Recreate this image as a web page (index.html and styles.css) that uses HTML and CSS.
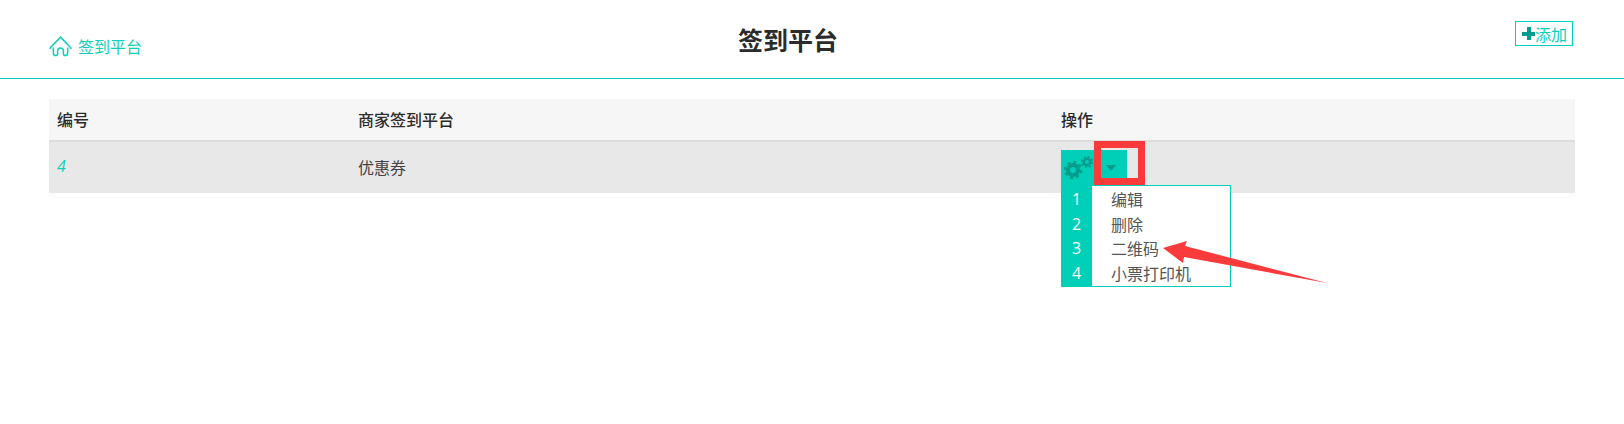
FILE: index.html
```html
<!DOCTYPE html>
<html lang="zh-CN">
<head>
<meta charset="utf-8">
<title>签到平台</title>
<link rel="stylesheet" href="styles.css">
</head>
<body>
<header class="topbar">
  <a class="home-link" href="#">
    <svg class="home-icon" viewBox="0 0 24 22" fill="none" stroke="currentColor" stroke-width="1.6">
      <path d="M1 13.5C1 12.5 1.5 12 2 11.5L12 1.2L22 11.5C22.5 12 23 12.5 23 13.5"/>
      <path d="M4.5 12V17.5Q4.5 20.5 7 20.5Q9 20.5 9 18V15.5Q9 12.5 12 12.5Q15 12.5 15 15.5V18Q15 20.5 17 20.5Q19.5 20.5 19.5 17.5V12"/>
    </svg>
    <span>签到平台</span>
  </a>
  <h1 class="page-title">签到平台</h1>
  <a class="add-btn" href="#"><span class="plus"></span>添加</a>
</header>

<main class="content">
  <div class="table-head">
    <div>编号</div>
    <div>商家签到平台</div>
    <div>操作</div>
  </div>
  <div class="table-row">
    <div class="cell-id">4</div>
    <div class="cell-name">优惠券</div>
    <div class="cell-actions">
      <div class="dropdown">
        <div class="btn-group">
          <span class="btn-gears">
            <svg class="gears" viewBox="0 0 32 28">
              <g fill="none" stroke="#049c8c">
                <circle cx="9" cy="18" r="5" stroke-width="4"/>
                <circle cx="9" cy="18" r="8" stroke-width="2.4" stroke-dasharray="3 3.28"/>
                <circle cx="23" cy="10" r="3.2" stroke-width="2.4"/>
                <circle cx="23" cy="10" r="5.2" stroke-width="1.8" stroke-dasharray="2 2.08"/>
              </g>
            </svg>
          </span>
          <span class="btn-caret"><i class="caret"></i></span>
        </div>
        <div class="menu">
          <ol class="menu-nums">
            <li>1</li>
            <li>2</li>
            <li>3</li>
            <li>4</li>
          </ol>
          <ul class="menu-items">
            <li>编辑</li>
            <li>删除</li>
            <li>二维码</li>
            <li>小票打印机</li>
          </ul>
        </div>
      </div>
    </div>
  </div>
</main>

<div class="mark-box"></div>
<svg class="mark-arrow" viewBox="0 0 180 50">
  <path d="M1 7L25 0L23 5L165 42L22 16L21 22Z" fill="#fb3a3c"/>
</svg>
</body>
</html>
```
FILE: styles.css
```css
* {
  box-sizing: border-box;
}

html,
body {
  margin: 0;
  padding: 0;
}

body {
  position: relative;
  height: 424px;
  overflow: hidden;
  background: #fff;
  color: #333;
  font-family: "Noto Sans CJK SC", "Open Sans", sans-serif;
  font-size: 16px;
}

.topbar {
  display: grid;
  grid-template-columns: 689px 100px 1fr;
  height: 79px;
  padding: 0 51px 0 49px;
  border-bottom: 1px solid #00cfb8;
}

.home-link {
  display: flex;
  align-items: center;
  gap: 6px;
  height: 24px;
  margin-top: 34px;
  color: #0cd0ba;
  font-size: 16px;
  text-decoration: none;
}

.home-icon {
  width: 23px;
  height: 21px;
}

.page-title {
  margin: 19px 0 0;
  color: #2b2b2b;
  font-size: 25px;
  font-weight: 700;
  line-height: 40px;
  white-space: nowrap;
}

.add-btn {
  display: flex;
  align-items: center;
  justify-self: end;
  height: 25px;
  width: 58px;
  margin-top: 21px;
  padding-left: 6px;
  border: 1px solid #00cfb8;
  color: #0cd0ba;
  font-size: 16px;
  text-decoration: none;
  white-space: nowrap;
}

.plus {
  flex: none;
  width: 13px;
  height: 13px;
  background:
    linear-gradient(#049c8c, #049c8c) center / 13px 4px no-repeat,
    linear-gradient(#049c8c, #049c8c) center / 4px 13px no-repeat;
}

.content {
  padding: 20px 49px 0;
}

.table-head,
.table-row {
  display: grid;
  grid-template-columns: 301px 703px 1fr;
}

.table-head {
  height: 43px;
  padding-bottom: 2px;
  align-items: center;
  border-bottom: 2px solid #dcdcdc;
  background: #f6f6f6;
  color: #2b2b2b;
  font-size: 16px;
  font-weight: 500;
}

.table-head > div,
.cell-id,
.cell-name {
  padding-left: 8px;
}

.table-row {
  height: 51px;
  background: #e8e8e8;
}

.cell-id {
  padding-top: 13px;
  color: #0cd0ba;
  font-family: "Open Sans", sans-serif;
  font-size: 16px;
  font-style: italic;
}

.cell-name {
  padding-top: 13px;
  color: #444;
}

.cell-actions {
  padding: 8px 0 0 8px;
}

.dropdown {
  position: relative;
  width: 66px;
}

.btn-group {
  display: flex;
  height: 35px;
  background: #00cfb8;
}

.btn-gears {
  width: 41px;
}

.gears {
  display: block;
  width: 32px;
  height: 28px;
  margin: 2px 0 0 3px;
}

.btn-caret {
  display: flex;
  justify-content: center;
  flex: 1;
  padding-top: 15px;
}

.caret {
  width: 0;
  height: 0;
  border-style: solid;
  border-width: 6px 5.5px 0;
  border-color: #049c8c transparent transparent;
  margin-left: -7px;
}

.menu {
  position: absolute;
  top: 35px;
  left: 0;
  display: flex;
  width: 170px;
  height: 102px;
  font-size: 16px;
  line-height: 24.5px;
}

.menu-nums,
.menu-items {
  margin: 0;
  list-style: none;
}

.menu-nums {
  width: 31px;
  padding: 2px 0 0;
  background: #00cfb8;
  color: #fff;
  font-family: "Open Sans", sans-serif;
  font-size: 16px;
  text-align: center;
}

.menu-items {
  flex: 1;
  padding: 1px 0 0 19px;
  border: 1px solid #00cfb8;
  border-left: 0;
  background: #fff;
  color: #555;
}

.mark-box {
  position: absolute;
  top: 141px;
  left: 1094px;
  width: 51px;
  height: 44px;
  border: 7px solid #fb3a3c;
}

.mark-arrow {
  position: absolute;
  top: 241px;
  left: 1162px;
  width: 180px;
  height: 50px;
}
```
